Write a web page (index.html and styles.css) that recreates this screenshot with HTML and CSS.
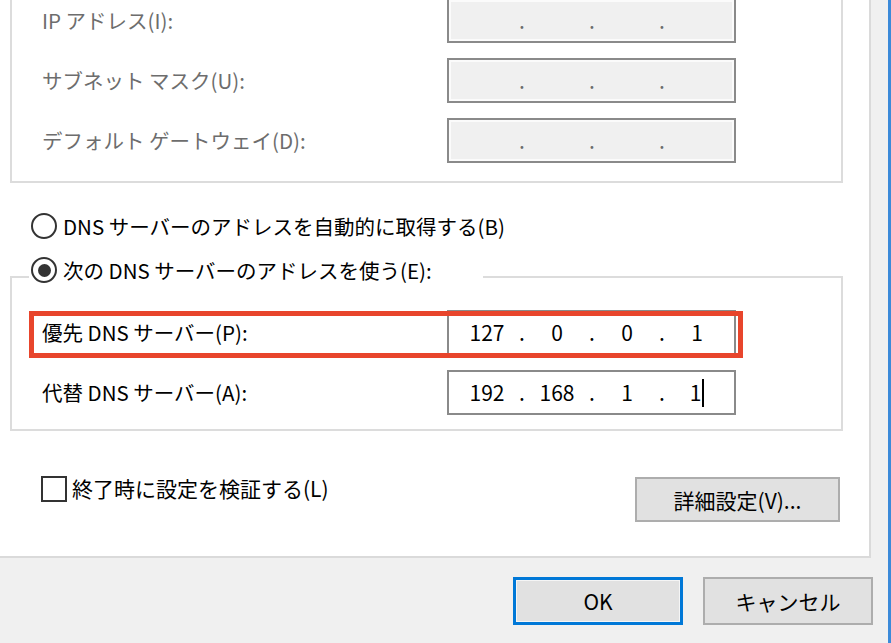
FILE: index.html
```html
<!DOCTYPE html>
<html lang="ja">
<head>
    <meta charset="UTF-8">
    <meta name="viewport" content="width=device-width, initial-scale=1.0">
    <title>インターネット プロトコル バージョン 4 (TCP/IPv4) のプロパティ</title>
    <link rel="stylesheet" href="styles.css">
</head>
<body>
    <div class="window">
        <div class="dialog">
            <div class="panel">
                <div class="group ip-group">
                    <div class="field-row">
                        <span class="field-label disabled">IP アドレス(I):</span>
                        <div class="ip-field is-disabled">
                            <span class="octet"></span><span class="dot">.</span><span class="octet"></span><span class="dot">.</span><span class="octet"></span><span class="dot">.</span><span class="octet"></span>
                        </div>
                    </div>
                    <div class="field-row">
                        <span class="field-label disabled">サブネット マスク(U):</span>
                        <div class="ip-field is-disabled">
                            <span class="octet"></span><span class="dot">.</span><span class="octet"></span><span class="dot">.</span><span class="octet"></span><span class="dot">.</span><span class="octet"></span>
                        </div>
                    </div>
                    <div class="field-row">
                        <span class="field-label disabled">デフォルト ゲートウェイ(D):</span>
                        <div class="ip-field is-disabled">
                            <span class="octet"></span><span class="dot">.</span><span class="octet"></span><span class="dot">.</span><span class="octet"></span><span class="dot">.</span><span class="octet"></span>
                        </div>
                    </div>
                </div>

                <label class="choice auto-dns"><span class="radio"></span>DNS サーバーのアドレスを自動的に取得する(B)</label>

                <div class="group dns-group">
                    <label class="choice group-title"><span class="radio checked"></span>次の DNS サーバーのアドレスを使う(E):</label>

                    <div class="field-row highlighted">
                        <span class="field-label">優先 DNS サーバー(P):</span>
                        <div class="ip-field">
                            <span class="octet">127</span><span class="dot">.</span><span class="octet">0</span><span class="dot">.</span><span class="octet">0</span><span class="dot">.</span><span class="octet">1</span>
                        </div>
                    </div>
                    <div class="field-row">
                        <span class="field-label">代替 DNS サーバー(A):</span>
                        <div class="ip-field">
                            <span class="octet">192</span><span class="dot">.</span><span class="octet">168</span><span class="dot">.</span><span class="octet">1</span><span class="dot">.</span><span class="octet">1<span class="caret"></span></span>
                        </div>
                    </div>
                </div>

                <div class="bottom-row">
                    <label class="choice"><span class="checkbox"></span>終了時に設定を検証する(L)</label>
                    <button type="button" class="btn btn-advanced">詳細設定(V)...</button>
                </div>
            </div>

            <div class="footer">
                <button type="button" class="btn btn-default">OK</button>
                <button type="button" class="btn">キャンセル</button>
            </div>
        </div>
        <div class="window-edge"></div>
    </div>
</body>
</html>
```

FILE: styles.css
```css
body {
    margin: 0;
    padding: 0;
    background-color: #f0f0f0;
    font-family: "Noto Sans CJK JP", "Noto Sans", sans-serif;
    font-size: 20.5px;
    color: #000;
    overflow: hidden;
}
.window {
    display: flex;
    height: 643px;
}
.dialog {
    width: 888px;
    display: flex;
    flex-direction: column;
}
.window-edge {
    width: 3px;
    background-color: #3b8ad9;
}
.panel {
    width: 871px;
    height: 558px;
    box-sizing: border-box;
    background-color: #fff;
    border-right: 2px solid #dadada;
    border-bottom: 2px solid #dadada;
    display: flex;
    flex-direction: column;
    align-items: flex-start;
}
.group {
    margin-left: 10px;
    width: 833px;
    box-sizing: border-box;
    border: 2px solid #dcdcdc;
    padding-left: 30px;
    display: flex;
    flex-direction: column;
    gap: 15px;
}
.ip-group {
    margin-top: -22px;
    padding-top: 18px;
    padding-bottom: 18px;
}
.dns-group {
    margin-top: 37px;
    padding-bottom: 14px;
    gap: 0;
}
.field-row {
    display: flex;
    align-items: center;
    height: 45px;
}
.dns-group .field-row + .field-row {
    margin-top: 15px;
}
.field-label {
    width: 405px;
    line-height: 1.2;
}
.field-label.disabled {
    color: #6d6d6d;
}
.ip-field {
    width: 289px;
    height: 45px;
    box-sizing: border-box;
    border: 2px solid #8a8a8a;
    background-color: #fff;
    padding-left: 10px;
    display: flex;
    align-items: center;
    font-size: 21px;
}
.ip-field.is-disabled {
    background-color: #f0f0f0;
    box-shadow: inset 0 0 0 2px #fbfbfb;
    color: #6d6d6d;
}
.octet {
    width: 56px;
    text-align: center;
    line-height: 1.2;
}
.dot {
    width: 14px;
    text-align: center;
    line-height: 1.2;
}
.caret {
    display: inline-block;
    width: 2px;
    height: 28px;
    background-color: #000;
    vertical-align: -6px;
    margin-left: 1px;
}

/* red annotation around the preferred DNS row */
.highlighted {
    position: relative;
}
.highlighted::after {
    content: "";
    position: absolute;
    left: -13px;
    top: 1px;
    width: 704px;
    height: 37px;
    border: 5px solid #e8452c;
}

.choice {
    display: flex;
    align-items: center;
    gap: 6px;
    height: 26px;
    line-height: 1.2;
    white-space: nowrap;
}
.auto-dns {
    margin-top: 30px;
    margin-left: 31px;
}
.group-title {
    margin-top: -21px;
    margin-left: -13px;
    padding-left: 2px;
    width: 454px;
    box-sizing: border-box;
    background-color: #fff;
    margin-bottom: 27px;
}
.radio {
    width: 26px;
    height: 26px;
    box-sizing: border-box;
    border: 2px solid #333;
    border-radius: 50%;
    background-color: #fff;
    display: flex;
    align-items: center;
    justify-content: center;
    flex-shrink: 0;
}
.radio.checked::before {
    content: "";
    width: 13px;
    height: 13px;
    border-radius: 50%;
    background-color: #333;
}
.checkbox {
    width: 26px;
    height: 26px;
    box-sizing: border-box;
    border: 2px solid #333;
    background-color: #fff;
    flex-shrink: 0;
}
.bottom-row {
    margin-top: 45px;
    width: 100%;
    box-sizing: border-box;
    padding-left: 41px;
    padding-right: 29px;
    display: flex;
    justify-content: space-between;
    align-items: flex-start;
}
.bottom-row .choice {
    gap: 5px;
    font-size: 21px;
}
.btn {
    font-family: inherit;
    font-size: 21px;
    color: #000;
    background-color: #e1e1e1;
    border: 2px solid #adadad;
    padding: 0;
    cursor: pointer;
}
.btn-advanced {
    margin-top: 1px;
    width: 205px;
    height: 45px;
}
.footer {
    flex: 1;
    display: flex;
    justify-content: flex-end;
    align-items: flex-start;
    gap: 20px;
    padding-top: 19px;
    padding-right: 15px;
}
.footer .btn {
    width: 170px;
    height: 48px;
}
.btn-default {
    border: 3px solid #0078d7;
    box-shadow: inset 0 0 0 1px #f5f5f5;
}
```
